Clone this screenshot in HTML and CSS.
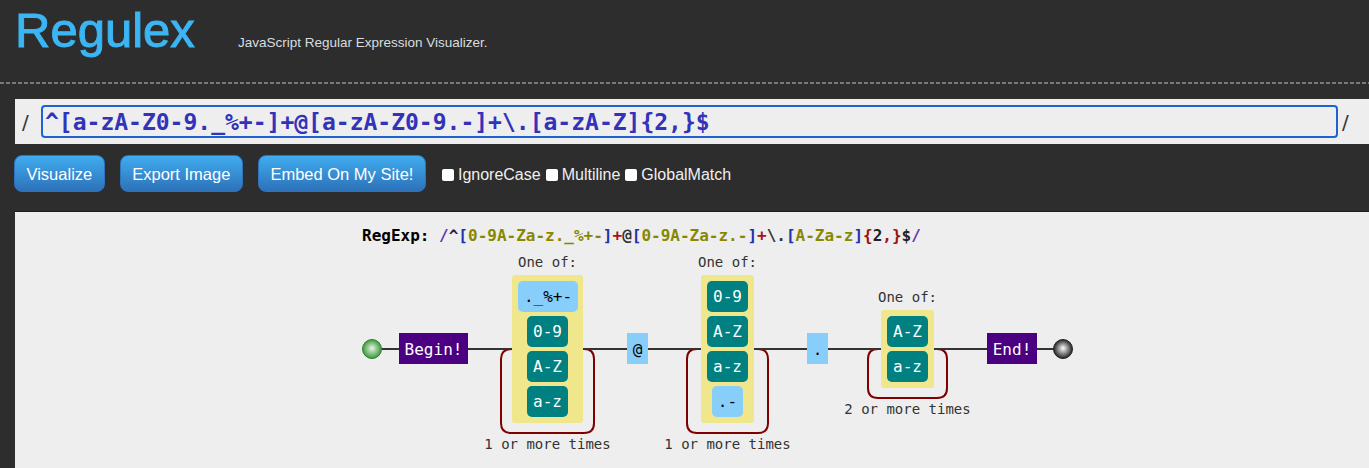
FILE: index.html
```html
<!DOCTYPE html>
<html>
<head>
<meta charset="utf-8">
<title>Regulex</title>
<link rel="stylesheet" href="styles.css">
</head>
<body>
<header class="header">
  <h1 class="logo">Regulex</h1>
  <span class="tagline">JavaScript Regular Expression Visualizer.</span>
</header>
<div class="dashes"></div>
<div class="regex-box">
  <span class="slash slash-left">/</span>
  <input class="regex-input" type="text" value="^[a-zA-Z0-9._%+-]+@[a-zA-Z0-9.-]+\.[a-zA-Z]{2,}$">
  <span class="slash slash-right">/</span>
</div>
<div class="toolbar">
  <button class="btn">Visualize</button>
  <button class="btn">Export Image</button>
  <button class="btn">Embed On My Site!</button>
  <div class="flags">
    <label class="flag"><input class="check" type="checkbox">IgnoreCase</label>
    <label class="flag"><input class="check" type="checkbox">Multiline</label>
    <label class="flag"><input class="check" type="checkbox">GlobalMatch</label>
  </div>
</div>
<div class="canvas">
  <svg class="diagram" width="1354" height="257" viewBox="15 211 1354 257" xmlns="http://www.w3.org/2000/svg">
    <defs>
      <radialGradient id="gStart" cx="50%" cy="50%" r="50%" fx="50%" fy="45%">
        <stop offset="0%" stop-color="#e6f5e6"/>
        <stop offset="100%" stop-color="#3a9a3a"/>
      </radialGradient>
      <radialGradient id="gEnd" cx="50%" cy="50%" r="50%" fx="50%" fy="45%">
        <stop offset="0%" stop-color="#ffffff"/>
        <stop offset="100%" stop-color="#222222"/>
      </radialGradient>
    </defs>

    <text class="src" x="362" y="241"><tspan fill="#000">RegExp:</tspan> <tspan fill="#6633aa">/</tspan><tspan fill="#222244">^</tspan><tspan fill="#2233aa">[</tspan><tspan fill="#888800">0-9A-Za-z._%+-</tspan><tspan fill="#2233aa">]</tspan><tspan fill="#aa1111">+</tspan><tspan fill="#333">@</tspan><tspan fill="#2233aa">[</tspan><tspan fill="#888800">0-9A-Za-z.-</tspan><tspan fill="#2233aa">]</tspan><tspan fill="#aa1111">+</tspan><tspan fill="#333">\.</tspan><tspan fill="#2233aa">[</tspan><tspan fill="#888800">A-Za-z</tspan><tspan fill="#2233aa">]</tspan><tspan fill="#a01010">{</tspan><tspan fill="#222">2</tspan><tspan fill="#a01010">,}</tspan><tspan fill="#222">$</tspan><tspan fill="#6633aa">/</tspan></text>

    <g class="loops" fill="none" stroke="#800000" stroke-width="2">
      <path d="M512,349 Q501,349 501,359 V423 Q501,433 511,433 H584 Q594,433 594,423 V359 Q594,349 584,349"/>
      <path d="M697,349 Q687,349 687,359 V423 Q687,433 697,433 H758 Q768,433 768,423 V359 Q768,349 758,349"/>
      <path d="M878,349 Q868,349 868,359 V388 Q868,398 878,398 H937 Q947,398 947,388 V359 Q947,349 937,349"/>
    </g>

    <g fill="none" stroke="#333" stroke-width="2">
      <path d="M382,349 H399 M468,349 H512 M583,349 H627 M648,349 H701 M754,349 H807 M828,349 H881 M934,349 H987 M1037,349 H1053"/>
    </g>

    <circle cx="372" cy="349" r="9.5" fill="url(#gStart)" stroke="#2f7f2f" stroke-width="1"/>
    <circle cx="1063" cy="349" r="9.5" fill="url(#gEnd)" stroke="#222" stroke-width="1"/>

    <rect x="399" y="333" width="69" height="31" fill="#4b0082"/>
    <text class="item light" x="433.5" y="354.5">Begin!</text>
    <rect x="987" y="333" width="50" height="31" fill="#4b0082"/>
    <text class="item light" x="1012" y="354.5">End!</text>

    <rect x="627" y="333" width="21" height="31" fill="#87cefa"/>
    <text class="item dark" x="637.5" y="354.5">@</text>
    <rect x="807" y="333" width="21" height="31" fill="#87cefa"/>
    <text class="item dark" x="817.5" y="354.5">.</text>

    <text class="label" x="547.5" y="267">One of:</text>
    <rect x="512" y="275" width="71" height="148" rx="3" fill="#f0e68c"/>
    <rect x="518" y="281" width="60" height="31" rx="5" fill="#87cefa"/>
    <text class="item dark" x="548" y="302">._%+-</text>
    <rect x="527" y="316" width="41" height="31" rx="5" fill="#008080"/>
    <text class="item light" x="547.5" y="337">0-9</text>
    <rect x="527" y="351" width="41" height="31" rx="5" fill="#008080"/>
    <text class="item light" x="547.5" y="372">A-Z</text>
    <rect x="527" y="386" width="41" height="31" rx="5" fill="#008080"/>
    <text class="item light" x="547.5" y="407">a-z</text>
    <text class="label" x="547.5" y="449">1 or more times</text>

    <text class="label" x="727.5" y="267">One of:</text>
    <rect x="701" y="275" width="53" height="148" rx="3" fill="#f0e68c"/>
    <rect x="707" y="281" width="41" height="31" rx="5" fill="#008080"/>
    <text class="item light" x="727.5" y="302">0-9</text>
    <rect x="707" y="316" width="41" height="31" rx="5" fill="#008080"/>
    <text class="item light" x="727.5" y="337">A-Z</text>
    <rect x="707" y="351" width="41" height="31" rx="5" fill="#008080"/>
    <text class="item light" x="727.5" y="372">a-z</text>
    <rect x="712" y="386" width="31" height="31" rx="5" fill="#87cefa"/>
    <text class="item dark" x="727.5" y="407">.-</text>
    <text class="label" x="727.5" y="449">1 or more times</text>

    <text class="label" x="907.5" y="302">One of:</text>
    <rect x="881" y="310" width="53" height="78" rx="3" fill="#f0e68c"/>
    <rect x="887" y="316" width="41" height="31" rx="5" fill="#008080"/>
    <text class="item light" x="907.5" y="337">A-Z</text>
    <rect x="887" y="351" width="41" height="31" rx="5" fill="#008080"/>
    <text class="item light" x="907.5" y="372">a-z</text>
    <text class="label" x="907.5" y="414">2 or more times</text>
  </svg>
</div>
</body>
</html>
```
FILE: styles.css
```css
html, body {
  margin: 0;
  padding: 0;
}
body {
  background: #2d2d2d;
  font-family: "Liberation Sans", Arial, sans-serif;
  overflow: hidden;
  width: 1369px;
  height: 468px;
}
.header {
  display: flex;
  align-items: baseline;
  height: 82px;
  box-sizing: border-box;
  padding: 6px 0 0 15px;
}
.logo {
  margin: 0;
  width: 223px;
  font-size: 49px;
  line-height: 48px;
  font-weight: normal;
  color: #3bb5f3;
  -webkit-text-stroke: 1px #3bb5f3;
}
.tagline {
  font-size: 13.5px;
  color: #d8dde0;
}
.dashes {
  height: 2px;
  background: repeating-linear-gradient(to right, #7a7a7a 0 4px, transparent 4px 6px);
}
.regex-box {
  margin: 15px 0 0 15px;
  height: 45px;
  background: #eee;
  display: flex;
  align-items: center;
  padding-left: 7px;
  overflow: hidden;
}
.slash {
  font-family: "DejaVu Sans", sans-serif;
  font-size: 20px;
  color: #333;
}
.slash-left {
  width: 19px;
  flex: none;
}
.slash-right {
  margin-left: 4px;
}
.regex-input {
  flex: none;
  width: 1297px;
  height: 33px;
  box-sizing: border-box;
  margin: 0;
  padding: 0 2px;
  border: 2px solid #1f63d2;
  border-radius: 4px;
  background: #eee;
  font-family: "DejaVu Sans Mono", monospace;
  font-weight: bold;
  font-size: 23px;
  color: #3232bb;
  outline: none;
}
.toolbar {
  display: flex;
  align-items: center;
  gap: 15px;
  margin-top: 11px;
  padding-left: 14px;
  height: 37px;
}
.btn {
  height: 37px;
  padding: 2px 11.5px 0;
  border: 1px solid #2f73bd;
  border-radius: 8px;
  background: linear-gradient(to bottom, #41acef 0%, #2c72ba 100%);
  color: #fff;
  font-family: "Liberation Sans", Arial, sans-serif;
  font-size: 16.5px;
  cursor: pointer;
}
.flags {
  display: flex;
  align-items: center;
  gap: 5px;
  margin-left: 1px;
  padding-top: 3px;
}
.flag {
  display: flex;
  align-items: center;
  color: #f0f0f0;
  font-size: 16px;
}
.check {
  appearance: none;
  -webkit-appearance: none;
  width: 12px;
  height: 12px;
  margin: 0 4px 0 0;
  background: #fff;
  border-radius: 2px;
  border: none;
}
.canvas {
  margin: 19px 0 0 15px;
  height: 257px;
  background: #eee;
  border-top: 1px solid #1e1e1e;
  box-sizing: border-box;
  overflow: hidden;
}
.diagram {
  display: block;
  margin-top: -1px;
}
.src {
  font-family: "DejaVu Sans Mono", monospace;
  font-weight: bold;
  font-size: 16px;
}
.item {
  font-family: "DejaVu Sans Mono", monospace;
  font-size: 16px;
  text-anchor: middle;
}
.item.light {
  fill: #fff;
}
.item.dark {
  fill: #000;
}
.label {
  font-family: "DejaVu Sans Mono", monospace;
  font-size: 14px;
  text-anchor: middle;
  fill: #333;
}
```
